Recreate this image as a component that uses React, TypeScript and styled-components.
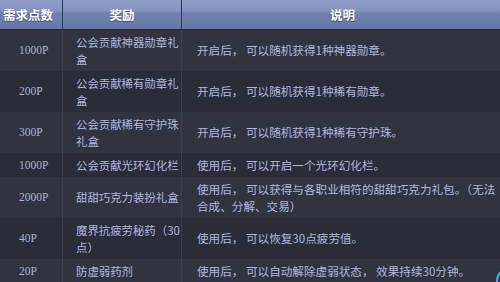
import React from 'react';
import styled, { createGlobalStyle } from 'styled-components';

const GlobalStyle = createGlobalStyle`
  html, body {
    margin: 0;
    padding: 0;
    background: #2a2d38;
    overflow: hidden;
  }
  * {
    box-sizing: border-box;
  }
`;

const Page = styled.div`
  position: relative;
  width: 500px;
  height: 282px;
  overflow: hidden;
  background: #2a2d38;
`;

const Table = styled.table`
  width: 503px;
  table-layout: fixed;
  border-collapse: separate;
  border-spacing: 0;
  font-family: "Noto Sans CJK SC", "Liberation Sans", sans-serif;
`;

// header cells share the glossy two-tone gradient; $shift nudges the label
const HeadCell = styled.th<{ $w: number; $first?: boolean; $shift?: number }>`
  width: ${p => p.$w}px;
  height: 30px;
  padding: 0 ${p => p.$shift ?? 0}px 1px 0;
  text-align: center;
  vertical-align: middle;
  font-size: 12.5px;
  font-weight: 700;
  color: #ffffff;
  text-shadow: 0 1px 1px rgba(30, 36, 64, 0.6);
  background: linear-gradient(
    to bottom,
    #909dc8 0%,
    #8593c0 38%,
    #7282b0 44%,
    #6677a7 100%
  );
  border-bottom: 1px solid #262935;
  border-left: ${p => (p.$first ? 'none' : '1px solid #2f3447')};
`;

const Row = styled.tr<{ $dark: boolean }>`
  background: ${p => (p.$dark ? '#2a2d38' : '#31343f')};
`;

const Cell = styled.td`
  padding: 3.5px 0;
  line-height: 17px;
  vertical-align: middle;
  color: #aeb8e0;
`;

const PointCell = styled(Cell)`
  padding-left: 19px;
  font-family: "Liberation Serif", serif;
  font-size: 11.5px;
  color: #a9b3da;
`;

const RewardCell = styled(Cell)`
  padding-left: 13px;
  font-size: 11.4px;
  border-left: 1px solid #3b3e4b;
`;

const DescCell = styled(Cell)`
  padding-left: 15px;
  padding-right: 6px;
  font-size: 11.6px;
  border-left: 1px solid #3b3e4b;
`;

const Badge = styled.div`
  position: absolute;
  left: 496px;
  top: 268px;
  width: 26px;
  height: 26px;
  border-radius: 50%;
  border: 2px solid #2bb8ea;
`;

const rows = [
  { p: '1000P', r: '公会贡献神器勋章礼盒', d: '开启后， 可以随机获得1种神器勋章。' },
  { p: '200P', r: '公会贡献稀有勋章礼盒', d: '开启后， 可以随机获得1种稀有勋章。' },
  { p: '300P', r: '公会贡献稀有守护珠礼盒', d: '开启后， 可以随机获得1种稀有守护珠。' },
  { p: '1000P', r: '公会贡献光环幻化栏', d: '使用后， 可以开启一个光环幻化栏。' },
  {
    p: '2000P',
    r: '甜甜巧克力装扮礼盒',
    d: '使用后， 可以获得与各职业相符的甜甜巧克力礼包。（无法合成、分解、交易）',
  },
  { p: '40P', r: '魔界抗疲劳秘药（30点）', d: '使用后， 可以恢复30点疲劳值。' },
  { p: '20P', r: '防虚弱药剂', d: '使用后， 可以自动解除虚弱状态， 效果持续30分钟。' },
];

export default function App() {
  return (
    <Page>
      <GlobalStyle />
      <Table>
        <thead>
          <tr>
            <HeadCell $w={62} $first $shift={6}>需求点数</HeadCell>
            <HeadCell $w={119}>奖励</HeadCell>
            <HeadCell $w={322}>说明</HeadCell>
          </tr>
        </thead>
        <tbody>
          {rows.map((row, i) => (
            <Row key={i} $dark={i % 2 === 1}>
              <PointCell>{row.p}</PointCell>
              <RewardCell>{row.r}</RewardCell>
              <DescCell>{row.d}</DescCell>
            </Row>
          ))}
        </tbody>
      </Table>
      <Badge />
    </Page>
  );
}
